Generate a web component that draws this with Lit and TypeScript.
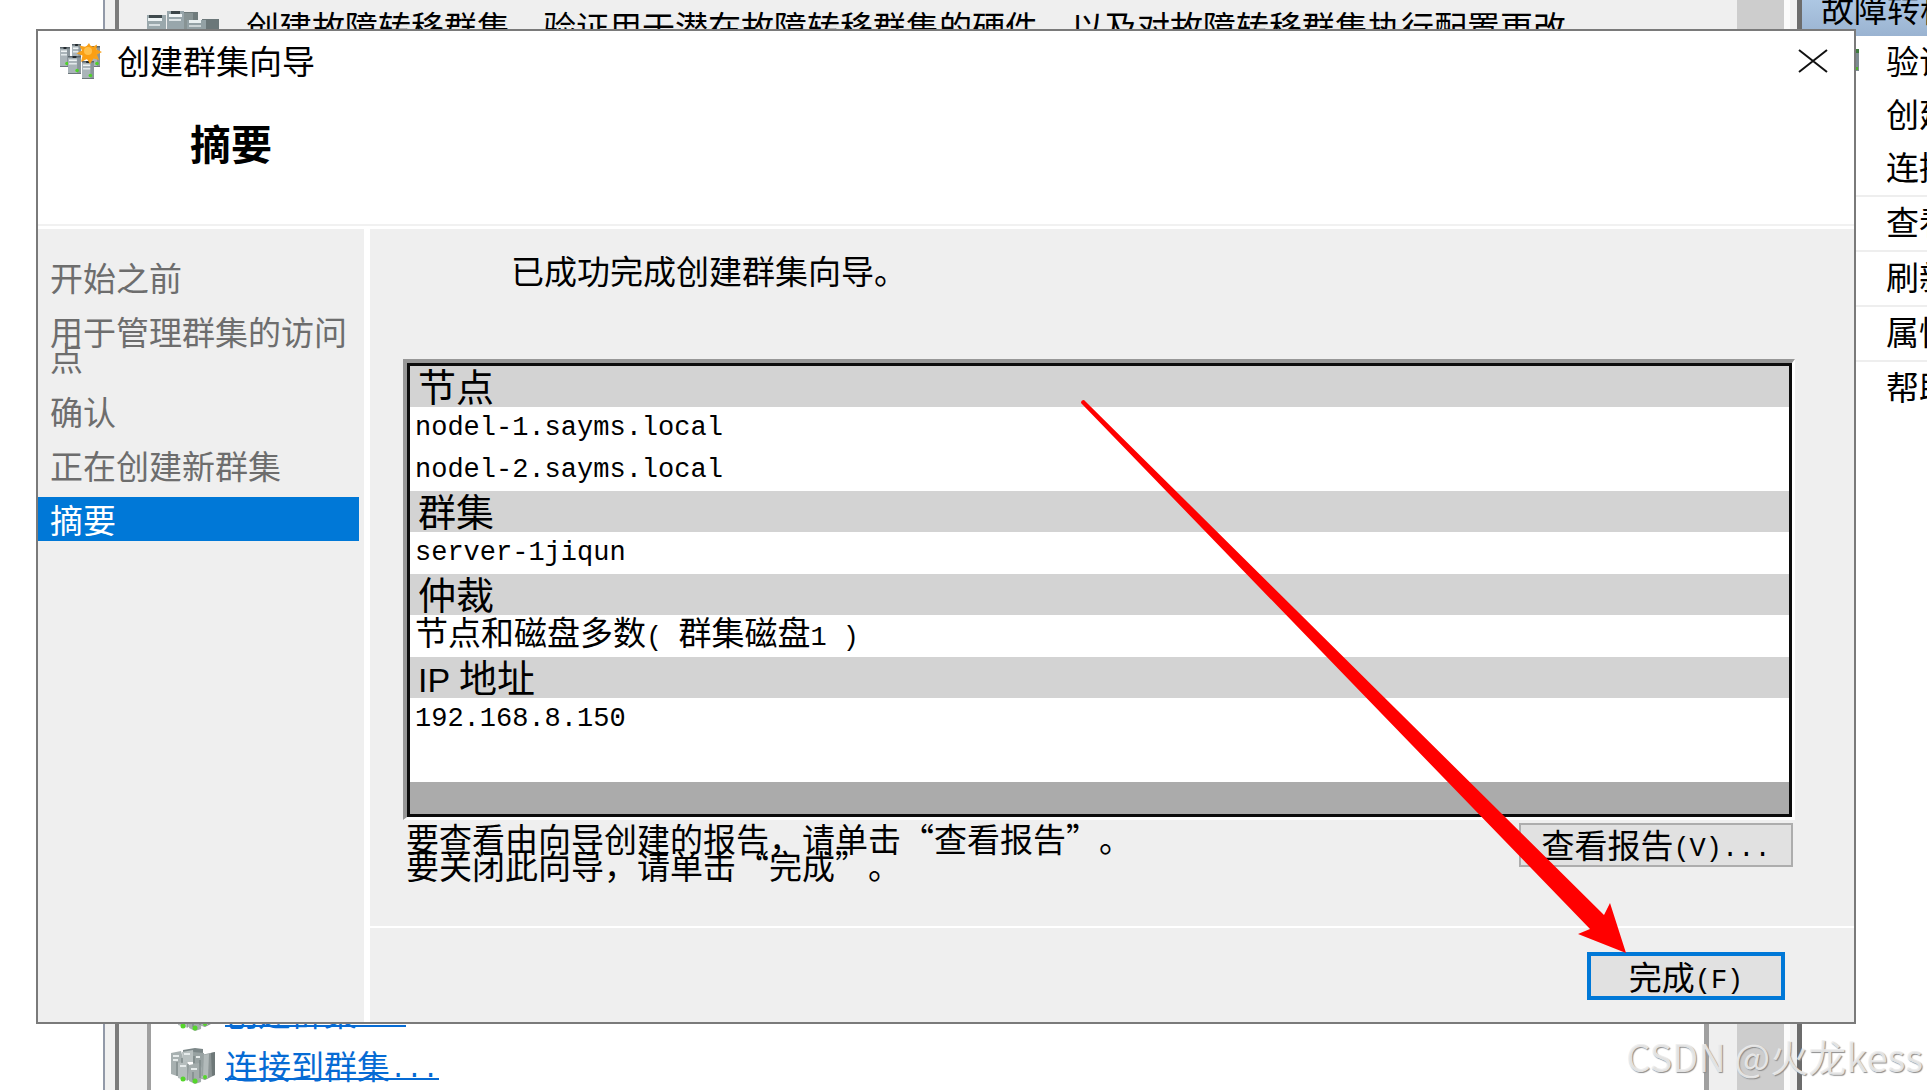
import { LitElement, html, svg, css } from "lit";
import { customElement } from "lit/decorators.js";

type Section = { title: unknown; rows: unknown[] };

const cjk = (text: string) => html`<span class="cjk">${text}</span>`;

/* One server tower: lit left face, shaded right edge, dark cap and drive slots. */
const tower = (x: number, y: number, w: number, h: number, led = true) => svg`
  <g>
    <rect x=${x} y=${y} width=${w} height=${h} fill="#8b969c"/>
    <rect x=${x} y=${y} width=${w * 0.7} height=${h} fill="#aab4b9"/>
    <rect x=${x} y=${y} width=${w} height="1.5" fill="#5b666c"/>
    <rect x=${x + w * 0.35} y=${y} width=${w * 0.3} height="2" fill="#22292d"/>
    <rect x=${x + 1} y=${y + 3.5} width=${w * 0.6} height="1.5" fill="#eef3f4"/>
    <rect x=${x + 1} y=${y + 7} width=${w * 0.6} height="1.5" fill="#e3eaec"/>
    <rect x=${x} y=${y + h - 1} width=${w} height="1" fill="#6d777c"/>
    ${led ? svg`<circle cx=${x + w * 0.7} cy=${y + h - 3.5} r="1.8" fill="#4fd32a"/>` : null}
  </g>`;

const wizardIcon = html`
  <svg class="wizard-icon" viewBox="0 0 42 37" aria-hidden="true">
    ${tower(0, 4, 10, 20)} ${tower(12, 1, 9, 18, false)} ${tower(30, 3, 10, 21)}
    ${tower(8, 13, 13, 18)} ${tower(22, 18, 12, 18)}
    <polygon fill="#f7a11b" points="29,0 31.5,4.5 37,1.5 36.5,6.5 42,9 37,11.5 39,17 33.500,15.500 30,21 27,16 21,19 22.500,12.500 16.500,10.500 22,7.500 19.500,2.500 26,4"/>
    <circle cx="29" cy="9.500" r="7" fill="#fb9f12"/>
    <circle cx="28" cy="8" r="4" fill="#ffc04a"/>
  </svg>`;

const clusterIcon = html`
  <svg class="cluster-icon" viewBox="0 0 44 36" aria-hidden="true">
    <polygon points="12,2 24,0 32,1 32,8 12,8" fill="#7c8788"/>
    <polygon points="30,7 44,4 44,27 34,32 28,30" fill="#8c9595"/>
    <polygon points="30,7 38,6 37,30 29,31" fill="#b2baba"/>
    <polygon points="40,5 44,4 44,27 41,28" fill="#6e7878"/>
    <polygon points="0,5 10,3 12,10 12,30 0,26" fill="#a7b0b0"/>
    <polygon points="11,4 22,2 23,14 12,14" fill="#b8c0c0"/>
    <polygon points="22,4 33,5 32,28 22,28" fill="#98a2a2"/>
    <polygon points="7,15 16,13 18,18 17,33 7,30" fill="#b5bdbd"/>
    <polygon points="18,17 28,15 31,20 30,34 24,36 18,33" fill="#a3acac"/>
    <path d="M2 8h6M2 12h5M13 6h6M9 18h6M20 21h6M25 9h4" stroke="#e6ebeb" stroke-width="2"/>
    <path d="M11 10v5M17 16v16M23 8v7M29 12v18M6 14v14M22 24v8" stroke="#6f7a7b" stroke-width="1"/>
    <circle cx="12" cy="31" r="2.500" fill="#55d62b"/>
    <circle cx="24" cy="33" r="2.500" fill="#55d62b"/>
    <circle cx="34" cy="29" r="2" fill="#55d62b"/>
  </svg>`;

const bannerIcon = html`
  <svg class="banner-icon" viewBox="0 0 72 60" aria-hidden="true">
    <rect x="34" y="2" width="17" height="40" fill="#6f7b7c"/>
    <rect x="36" y="3" width="10" height="40" fill="#879394"/>
    <rect x="0" y="5" width="19" height="40" fill="#9aa8ac"/>
    <rect x="2" y="5" width="13" height="3" fill="#3f4a4d"/>
    <rect x="1" y="8" width="14" height="3" fill="#edf3f4"/>
    <rect x="2" y="14" width="11" height="2" fill="#d6dee0"/>
    <rect x="20" y="1" width="17" height="44" fill="#98a6ab"/>
    <rect x="24" y="1" width="9" height="3" fill="#3b4548"/>
    <rect x="22" y="4" width="13" height="3" fill="#f0f5f6"/>
    <rect x="22" y="9" width="12" height="2" fill="#dde4e6"/>
    <rect x="55" y="9" width="17" height="40" fill="#6b7779"/>
    <rect x="40" y="10" width="19" height="40" fill="#93a1a5"/>
    <rect x="42" y="10" width="12" height="3" fill="#e9f0f1"/>
    <rect x="42" y="15" width="12" height="2" fill="#cbd4d6"/>
  </svg>`;

@customElement("app-root")
export class AppRoot extends LitElement {
  static styles = css`
    :host {
      display: block;
      font-family: "Noto Sans CJK SC", "Liberation Sans", sans-serif;
      font-size: 33px;
      line-height: 32px;
      color: #000;
      text-spacing-trim: space-all;
    }
    * { box-sizing: border-box; }
    h1, h2, p, ul, ol, dl, dt, dd { margin: 0; padding: 0; }
    ul, ol { list-style: none; }
    button {
      font: inherit;
      color: inherit;
      padding: 0;
      border: 0;
      background: none;
      white-space: nowrap;
    }
    svg { display: block; flex: none; }
    .stage {
      position: relative;
      display: grid;
      grid-template-columns: minmax(0, 1fr);
      min-height: 100vh;
      overflow: hidden;
      background: #fff;
    }

    /* Management console behind the wizard */
    .console {
      grid-area: 1 / 1;
      display: flex;
      min-width: 0;
      padding-left: 103px;
    }
    .tree-edge {
      flex: none;
      width: 16px;
      background: #f0f0f0;
      border-left: 2px solid #9299a8;
      border-right: 4px solid #7b7b7b;
    }
    .center {
      flex: 1;
      min-width: 0;
      display: flex;
      flex-direction: column;
      padding: 10px 28px 0;
      background: #efefef;
    }
    .banner {
      display: flex;
      gap: 27px;
      height: 70px;
      white-space: nowrap;
    }
    .banner-icon { width: 72px; height: 60px; }
    .links {
      flex: 1;
      display: flex;
      flex-direction: column;
      justify-content: flex-end;
      gap: 13px;
      padding: 0 0 4px 20px;
      background: #fff;
      border: solid #a0a0a0;
      border-width: 4px 5px 0 4px;
    }
    .links li {
      display: flex;
      align-items: center;
      gap: 10px;
      height: 40px;
    }
    .cluster-icon { width: 44px; height: 36px; }
    .link {
      color: #066bd4;
      text-decoration: none;
      line-height: 26px;
      border-bottom: 2px solid #066bd4;
    }
    .scroll {
      flex: none;
      width: 47px;
      background: #cdcdcd;
    }
    .pane-edge {
      flex: none;
      width: 18px;
      background: #f0f0f0;
      border-left: 6px solid #fbfbfb;
      border-right: 5px solid #6c6c6c;
    }
    .actions {
      flex: none;
      width: 125px;
      overflow: hidden;
      white-space: nowrap;
      background: #fff;
    }
    .actions-title {
      height: 36px;
      padding: 0 0 0 19px;
      font-size: 33px;
      font-weight: 400;
      line-height: 16px;
      background: linear-gradient(#adc7e3, #9ab3d1);
    }
    .action {
      display: grid;
      grid-template-columns: 36px 80px;
      gap: 27px;
      align-items: center;
      height: 53px;
      padding: 0 0 6px 21px;
    }
    .action.ruled {
      height: 55px;
      border-top: 2px solid #eee;
    }
    .action span { grid-column: 2; }
    .action-icon { width: 36px; height: 22px; }

    /* Wizard window */
    .wizard {
      grid-area: 1 / 1;
      position: relative;
      display: flex;
      flex-direction: column;
      min-width: 0;
      margin: 29px 71px 66px 36px;
      background: #fff;
      border: 2px solid #7a7a7a;
    }
    .titlebar {
      display: flex;
      align-items: center;
      gap: 15px;
      height: 62px;
      padding: 0 26px 2px 22px;
    }
    .wizard-icon { width: 42px; height: 37px; }
    .title {
      flex: 1;
      padding-bottom: 2px;
    }
    .close { width: 30px; height: 24px; }
    .close svg { width: 30px; height: 24px; }
    .page-title {
      padding: 0 0 33px 152px;
      font-size: 41px;
      font-weight: 700;
      line-height: 98px;
      border-bottom: 2px solid #f1f1f1;
    }
    .body {
      flex: 1;
      display: flex;
      gap: 6px;
      margin-top: 3px;
    }
    .steps {
      flex: none;
      width: 326px;
      display: flex;
      flex-direction: column;
      gap: 10px;
      padding: 26px 5px 0 0;
      color: #6d6d6d;
      background: #efefef;
    }
    .step {
      padding: 9px 8px 9px 12px;
      line-height: 26px;
    }
    .step.current {
      color: #fff;
      background: #0078d7;
    }
    .main {
      flex: 1;
      min-width: 0;
      display: flex;
      flex-direction: column;
      gap: 2px;
    }
    .content {
      flex: 1;
      padding: 25px 59px 0 33px;
      background: #efefef;
    }
    .message { padding: 0 0 73px 108px; }
    .report {
      border: solid;
      border-width: 4px 3px 3px 4px;
      border-color: #979797 #fff #fff #979797;
    }
    .sections {
      background: #ababab;
      border: 3px solid #0c0c0c;
      padding-bottom: 32px;
    }
    .sections dt {
      padding: 0 0 3px 8px;
      font-size: 38px;
      line-height: 38px;
      background: #d3d3d3;
    }
    .sections dd {
      height: 42px;
      padding-left: 5px;
      background: #fff;
      white-space: pre;
    }
    .sections dd,
    .mono {
      font-family: "Liberation Mono", monospace;
      font-size: 27px;
      line-height: 42px;
    }
    .mono {
      line-height: 0;
      vertical-align: 2px;
    }
    .cjk {
      font-family: "Noto Sans CJK SC", sans-serif;
      font-size: 33px;
      line-height: 1;
    }
    .latin {
      font-family: "Liberation Sans", sans-serif;
      font-size: 34px;
      line-height: 0;
      white-space: pre;
    }
    .after {
      display: flex;
      justify-content: space-between;
      align-items: flex-start;
      padding: 3px 2px 0 3px;
    }
    .hint {
      padding-top: 2px;
      line-height: 27px;
    }
    .view {
      width: 274px;
      height: 44px;
      padding-bottom: 2px;
      background: #e1e1e1;
      border: 2px solid #adadad;
    }
    .footer {
      display: flex;
      justify-content: flex-end;
      padding: 24px 69px 22px;
      background: #efefef;
    }
    .finish {
      width: 198px;
      height: 48px;
      background: #e1e1e1;
      border: 4px solid #0078d7;
    }

    /* Annotations over both windows */
    .arrow {
      position: absolute;
      right: 301px;
      bottom: 137px;
      width: 545px;
      height: 553px;
      pointer-events: none;
    }
    .watermark {
      position: absolute;
      right: 4px;
      bottom: 14px;
      font-size: 38px;
      line-height: 40px;
      color: rgba(238, 238, 238, 0.9);
      text-shadow: 1px 1px 1px #8c8c8c;
      white-space: nowrap;
    }
  `;

  private steps = ["开始之前", "用于管理群集的访问点", "确认", "正在创建新群集", "摘要"];

  private current = "摘要";

  private sections: Section[] = [
    { title: "节点", rows: ["nodel-1.sayms.local", "nodel-2.sayms.local"] },
    { title: "群集", rows: ["server-1jiqun"] },
    {
      title: "仲裁",
      rows: [html`${cjk("节点和磁盘多数")}( ${cjk("群集磁盘")}1 )`],
    },
    { title: html`<span class="latin">IP </span>地址`, rows: ["192.168.8.150", ""] },
  ];

  private actions = [
    { label: "验证", icon: true },
    { label: "创建" },
    { label: "连接" },
    { label: "查看", ruled: true },
    { label: "刷新", ruled: true },
    { label: "属性", ruled: true },
    { label: "帮助", ruled: true },
  ];

  private renderConsole() {
    return html`
      <div class="console">
        <div class="tree-edge"></div>
        <div class="center">
          <div class="banner">
            ${bannerIcon}
            <p>创建故障转移群集，验证用于潜在故障转移群集的硬件，以及对故障转移群集执行配置更改。</p>
          </div>
          <ul class="links">
            <li>${clusterIcon}<a class="link" href="#create">创建群集<span class="mono">...</span></a></li>
            <li>${clusterIcon}<a class="link" href="#connect">连接到群集<span class="mono">...</span></a></li>
          </ul>
        </div>
        <div class="scroll"></div>
        <div class="pane-edge"></div>
        <div class="actions">
          <h2 class="actions-title">故障转移</h2>
          <ul>
            ${this.actions.map(
              (a) => html`
                <li class="action ${a.ruled ? "ruled" : ""}">
                  ${a.icon
                    ? html`<svg class="action-icon" viewBox="0 0 36 22" aria-hidden="true">
                        <rect x="24" width="12" height="22" fill="#7d8a90"/>
                        <rect x="33" width="3" height="4" fill="#3f7a3f"/>
                        <rect x="33" y="18" width="2" height="3" fill="#4fb02a"/>
                      </svg>`
                    : null}
                  <span>${a.label}</span>
                </li>`
            )}
          </ul>
        </div>
      </div>`;
  }

  private renderWizard() {
    return html`
      <section class="wizard" role="dialog" aria-labelledby="wizard-title">
        <header class="titlebar">
          ${wizardIcon}
          <span class="title" id="wizard-title">创建群集向导</span>
          <button class="close" type="button" aria-label="关闭">
            <svg viewBox="0 0 30 24" aria-hidden="true">
              <path d="M1 1L29 23M29 1L1 23" stroke="#111" stroke-width="2" fill="none"/>
            </svg>
          </button>
        </header>
        <h1 class="page-title">摘要</h1>
        <div class="body">
          <ol class="steps">
            ${this.steps.map(
              (s) => html`<li class="step ${s === this.current ? "current" : ""}">${s}</li>`
            )}
          </ol>
          <div class="main">
            <div class="content">
              <p class="message">已成功完成创建群集向导。</p>
              <div class="report">
                <dl class="sections">
                  ${this.sections.map(
                    (s) => html`<dt>${s.title}</dt>${s.rows.map((r) => html`<dd>${r}</dd>`)}`
                  )}
                </dl>
              </div>
              <div class="after">
                <p class="hint">要查看由向导创建的报告，请单击“查看报告”。<br />要关闭此向导，请单击“完成”。</p>
                <button class="view" type="button">查看报告<span class="mono">(V)...</span></button>
              </div>
            </div>
            <footer class="footer">
              <button class="finish" type="button">完成<span class="mono">(F)</span></button>
            </footer>
          </div>
        </div>
      </section>`;
  }

  render() {
    return html`
      <div class="stage" lang="zh-CN">
        ${this.renderConsole()} ${this.renderWizard()}
        <svg class="arrow" viewBox="0 0 545 553" aria-hidden="true">
          <path d="M3 0L523 515L529 503L545 553L497 534L509 529L0 3Q0 0 3 0Z" fill="#f00"/>
        </svg>
        <div class="watermark">CSDN @火龙kess</div>
      </div>`;
  }
}
